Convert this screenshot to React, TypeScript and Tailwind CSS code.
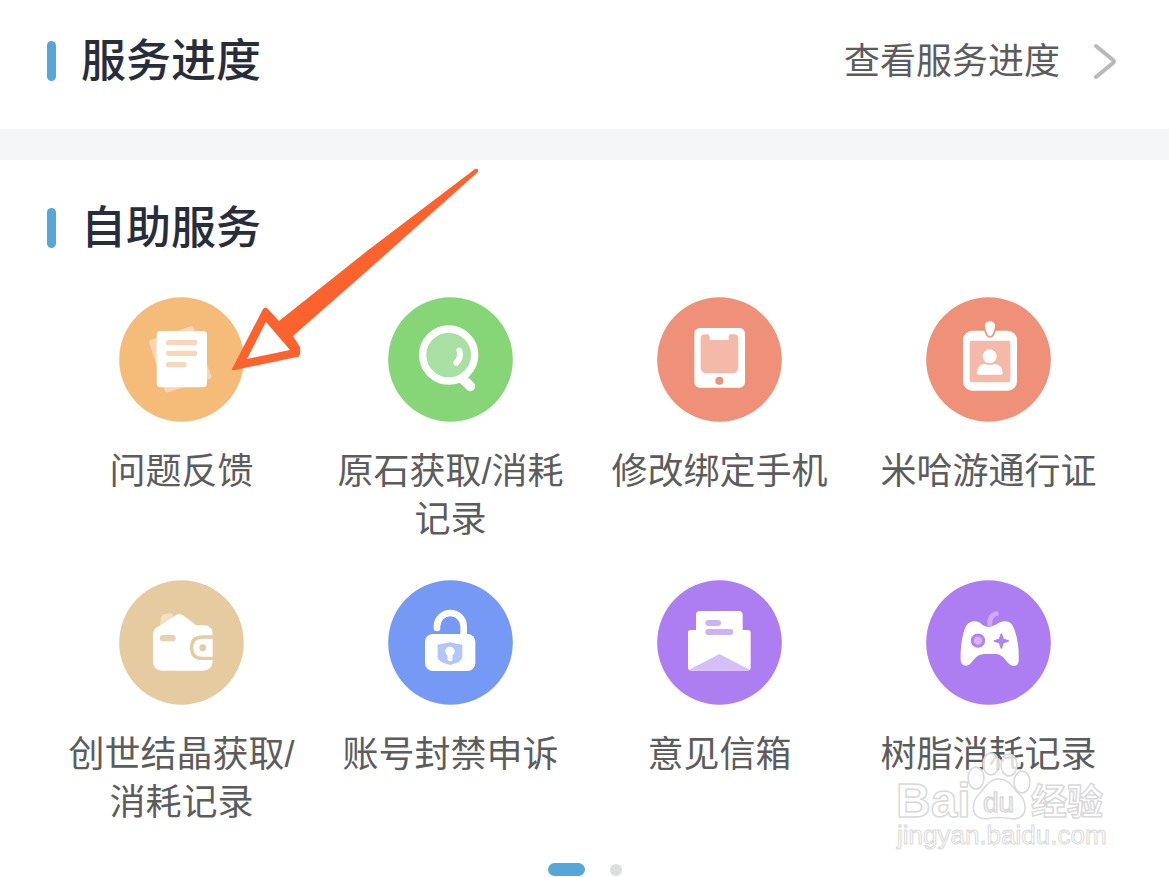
import React from 'react';

interface Service {
  label: string;
  color: string;
  icon: React.ReactNode;
}

const services: Service[] = [
  {
    label: '问题反馈',
    color: '#f4bb79',
    icon: (
      <>
        <path d="M95 128 L216 88 Q222 86 225 93 L277 236 Q279 242 273 245 L148 286 Q141 288 138 281 L91 138 Q89 130 95 128Z" fill="#f9d5b3" />
        <rect x="113" y="102" width="151" height="169" rx="12" fill="#fff" />
        <path d="M149 137H227M149 169H227M149 203H195" stroke="#f8d6b9" strokeWidth="16" strokeLinecap="round" />
      </>
    ),
  },
  {
    label: '原石获取/消耗记录',
    color: '#86d677',
    icon: (
      <>
        <path d="M222 244L247 268" stroke="#fff" strokeWidth="29" strokeLinecap="round" />
        <circle cx="182" cy="174" r="78" fill="#a8dfa2" stroke="#fff" strokeWidth="22" />
        <path d="M214 161Q221 183 205 197" fill="none" stroke="#fff" strokeWidth="18" strokeLinecap="round" />
      </>
    ),
  },
  {
    label: '修改绑定手机',
    color: '#ee9178',
    icon: (
      <>
        <rect x="112" y="93" width="152" height="179" rx="16" fill="#fff" />
        <path d="M131 124Q131 112 143 112H150Q158 112 158 120V129H215V120Q215 112 223 112H232Q244 112 244 124V209Q244 229 224 229H151Q131 229 131 209Z" fill="#f4b9a9" />
        <circle cx="187" cy="251" r="12" fill="#ee9178" />
      </>
    ),
  },
  {
    label: '米哈游通行证',
    color: '#ee9178',
    icon: (
      <>
        <rect x="111" y="101" width="162" height="180" rx="28" fill="#fff" />
        <rect x="131" y="131" width="122" height="125" rx="7" fill="#f4b9a9" />
        <path d="M192 73C203 73 209 81 207 91Q205 103 199 113Q192 122 185 113Q179 103 177 91C175 81 181 73 192 73Z" fill="#fff" stroke="#ee9178" strokeWidth="10" paintOrder="stroke" />
        <circle cx="191" cy="178" r="21" fill="#fff" />
        <path d="M153 228Q154 201 177 201Q191 207 206 201Q229 203 230 228Q230 233 225 233H158Q153 233 153 228Z" fill="#fff" />
      </>
    ),
  },
  {
    label: '创世结晶获取/消耗记录',
    color: '#e6cba1',
    icon: (
      <>
        <path d="M122 139L127 111Q131 101 142 102L157 99L164 111L140 143Z" fill="#f3dfc4" />
        <path d="M102 166Q102 144 122 138L168 107Q182 98 195 108L232 136H254Q281 136 281 163V246Q277 272 253 272H130Q102 272 102 244Z" fill="#fff" />
        <path d="M288 171H250Q218 171 218 203T250 235H288Z" fill="#fff" stroke="#e6cba1" strokeWidth="10" />
        <path d="M281 160H298V250H281Z" fill="#e6cba1" />
        <circle cx="251" cy="203" r="10" fill="#e6cba1" />
        <rect x="123" y="165" width="47" height="19" rx="8" fill="#ead1ac" />
      </>
    ),
  },
  {
    label: '账号封禁申诉',
    color: '#7699f6',
    icon: (
      <>
        <path d="M147 144V139A40 40 0 0 1 227 139V170" fill="none" stroke="#fff" strokeWidth="20" strokeLinecap="round" />
        <rect x="111" y="162" width="151" height="111" rx="24" fill="#fff" />
        <path d="M149 194L186 187L223 194V232Q223 246 186 255Q149 246 149 232Z" fill="#b4c5f9" />
        <circle cx="186" cy="214" r="14" fill="#fff" />
        <path d="M186 216V236" stroke="#fff" strokeWidth="15" strokeLinecap="round" />
      </>
    ),
  },
  {
    label: '意见信箱',
    color: '#ad7ef2',
    icon: (
      <>
        <path d="M93 158Q93 150 101 150H117V105Q117 93 129 93H245Q257 93 257 105V150H273Q281 150 281 158V262Q281 272 271 272H103Q93 272 93 262Z" fill="#fff" />
        <path d="M182 225Q187 221 193 225L275 268Q279 272 271 272H103Q95 272 99 268Z" fill="#d5bff8" />
        <path d="M154 129H183M154 156H220" stroke="#cdb1f7" strokeWidth="18" strokeLinecap="round" />
      </>
    ),
  },
  {
    label: '树脂消耗记录',
    color: '#ad7ef2',
    icon: (
      <>
        <path d="M104 240C102 195 112 150 122 135Q138 117 162 128Q176 141 190 141Q206 139 222 127Q248 117 260 137C272 160 280 200 278 240Q278 258 262 258Q252 257 242 244Q228 223 210 222H174Q156 222 142 240Q132 257 120 257Q105 257 104 240Z" fill="#fff" />
        <path d="M191 132Q191 105 211 101" fill="none" stroke="#cfa9f7" strokeWidth="15" strokeLinecap="round" />
        <circle cx="156" cy="182" r="17" fill="#d3b5f8" stroke="#b083ee" strokeWidth="9" />
        <path d="M226 162L231 178L247 183L231 188L226 204L221 188L205 183L221 178Z" fill="#b083ee" stroke="#b083ee" strokeWidth="5" strokeLinejoin="round" />
      </>
    ),
  },
];

const SectionTitle: React.FC<{ children: React.ReactNode }> = ({ children }) => (
  <div className="flex items-center gap-[25px]">
    <span className="h-10 w-[9px] rounded-full bg-[#56a6da]" />
    <h2 className="pt-0.5 text-[45px] leading-[62px] font-medium text-[#272d3b]">{children}</h2>
  </div>
);

const ServiceTile: React.FC<{ service: Service }> = ({ service }) => (
  <button type="button" className="flex cursor-pointer flex-col items-center px-4">
    <svg viewBox="0 0 375 375" className="size-[125px]" aria-hidden="true">
      <circle cx="187.5" cy="187.5" r="187" fill={service.color} />
      {service.icon}
    </svg>
    <span className="mt-[26px] text-4xl leading-12 text-[#5c5c5c]">{service.label}</span>
  </button>
);

const PointerArrow: React.FC = () => (
  <svg
    viewBox="0 0 248 204"
    className="pointer-events-none absolute top-[7px] left-[231px] h-[204px] w-[248px]"
    aria-hidden="true"
  >
    <path
      fill="#fb622e"
      d="M1 202L32 142Q34 139 37 142L48 154L136 84L244 2Q248 1 247 5L136 104L62 169L69 180Q70 191 66 190L4 203Q0 204 1 202Z"
    />
    <path d="M35 155L59 183L16 192Z" fill="#fff" />
  </svg>
);

const Watermark: React.FC = () => (
  <svg
    viewBox="0 0 216 104"
    className="pointer-events-none absolute right-[59px] bottom-[24px] h-[104px] w-[216px] font-['Liberation_Sans','Noto_Sans_CJK_SC',sans-serif] font-bold"
    fill="#fff"
    fillOpacity="0.8"
    stroke="#d9d9d9"
    strokeWidth="1.5"
  >
    <text x="2" y="68" fontSize="48">Bai</text>
    <ellipse cx="82" cy="29" rx="8" ry="11" />
    <ellipse cx="97" cy="15" rx="8" ry="11" />
    <ellipse cx="115" cy="16" rx="8" ry="11" />
    <ellipse cx="128" cy="33" rx="8" ry="11" />
    <path d="M105 30C113 30 118 36 123 43C133 51 136 69 119 70Q105 67 92 70C75 69 77 52 87 43C92 36 97 30 105 30Z" />
    <text x="89" y="63" fontSize="28" className="font-normal">du</text>
    <text x="137" y="66" fontSize="36">经验</text>
    <text x="3" y="95" fontSize="26" className="font-normal" strokeWidth="1">jingyan.baidu.com</text>
  </svg>
);

export default function App() {
  return (
    <main className="relative min-h-screen bg-white font-['Liberation_Sans','Noto_Sans_CJK_SC',sans-serif]">
      <section className="flex items-center justify-between pt-[29px] pr-[53px] pb-9 pl-[47px]">
        <SectionTitle>服务进度</SectionTitle>
        <a href="#progress" className="flex items-center gap-8 text-4xl leading-12 text-[#5c5c5c]">
          <span className="pt-0.5">查看服务进度</span>
          <svg viewBox="0 0 24 36" className="h-9 w-6" fill="none" aria-hidden="true">
            <path d="M4 3L21 17Q23 18 21 20L4 34" stroke="#b9b9bd" strokeWidth="4" strokeLinecap="round" />
          </svg>
        </a>
      </section>

      <div className="h-[31px] bg-[#f5f6f8]" />

      <section className="relative pt-9">
        <div className="pl-[47px]">
          <SectionTitle>自助服务</SectionTitle>
        </div>
        <div className="mt-[37px] grid grid-cols-4 gap-y-9 pr-[46px] pl-[47px]">
          {services.map((service) => (
            <ServiceTile key={service.label} service={service} />
          ))}
        </div>
        <PointerArrow />
      </section>

      <div className="mt-9 flex items-center justify-center gap-[25px]">
        <span className="h-[13px] w-[37px] rounded-full bg-[#56a6da]" />
        <span className="size-3 rounded-full bg-[#dcdde1]" />
      </div>

      <Watermark />
    </main>
  );
}
